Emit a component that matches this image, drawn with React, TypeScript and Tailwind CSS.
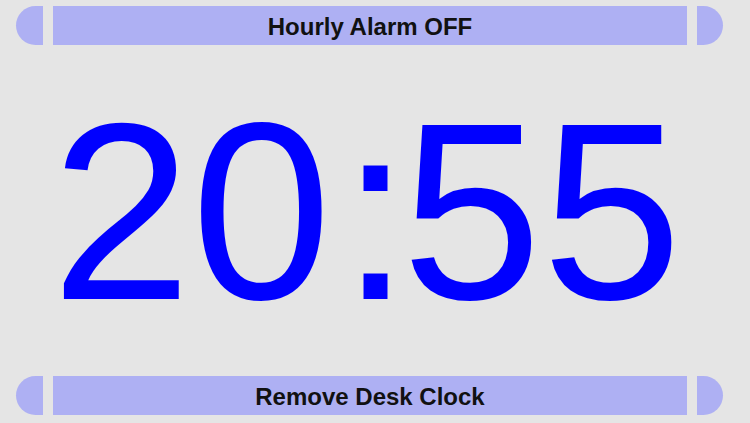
import React from "react";

function Bar({ label }: { label: string }) {
  return (
    <div className="flex h-[39px] items-stretch pl-[16px]">
      <div className="w-[27px] rounded-l-full bg-[#aeb0f3]" />
      <div className="ml-[10px] flex w-[634px] items-center justify-center bg-[#aeb0f3]">
        <span className="font-['Liberation_Sans',Arial,sans-serif] text-[24px] font-bold leading-none text-[#111] pt-[2px]">
          {label}
        </span>
      </div>
      <div className="ml-[10px] w-[26px] rounded-r-full bg-[#aeb0f3]" />
    </div>
  );
}

export default function App() {
  return (
    <div className="h-[423px] w-[750px] overflow-hidden bg-[#e5e5e5]">
      <div className="pt-[6px]">
        <Bar label="Hourly Alarm OFF" />
      </div>
      <div className="mt-[41px] flex h-[252px] justify-center pr-[17px] font-['Liberation_Sans',Arial,sans-serif] text-[252px] leading-none text-[#0000ff]">
        <span>20</span>
        <span className="ml-[9px] tracking-[-9px]">:</span>
        <span>55</span>
      </div>
      <div className="mt-[38px]">
        <Bar label="Remove Desk Clock" />
      </div>
    </div>
  );
}
